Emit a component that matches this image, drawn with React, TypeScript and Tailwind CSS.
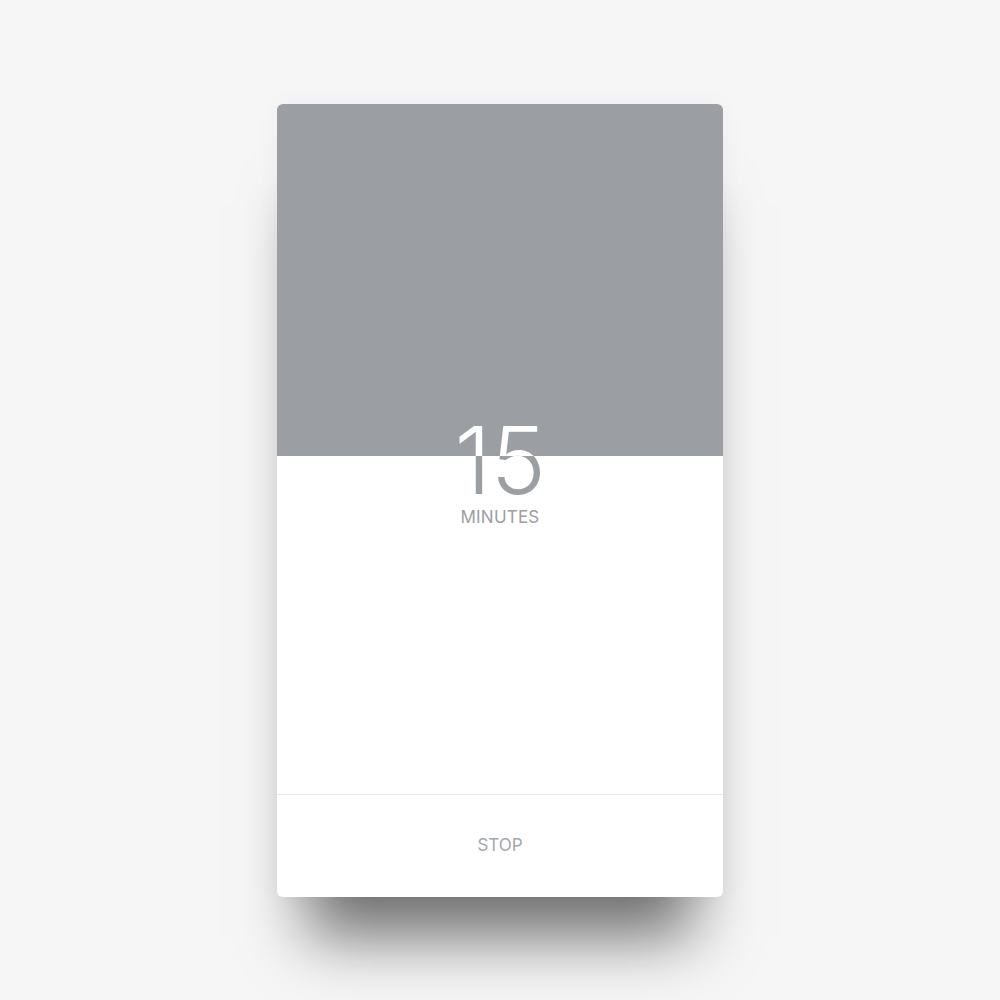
import React from "react";

function Readout({ tone }: { tone: string }) {
  return (
    <div className="flex flex-col items-center pt-[310px]">
      <div
        className={`text-[93px] leading-none font-light tracking-[-0.5px] ${tone}`}
        style={{ fontFamily: "Inter, 'Noto Sans', sans-serif" }}
      >
        15
      </div>
      <div
        className={`mt-[2px] text-[17px] leading-none tracking-[0.2px] ${tone}`}
        style={{ fontFamily: "Inter, 'Noto Sans', sans-serif" }}
      >
        MINUTES
      </div>
    </div>
  );
}

export default function App() {
  return (
    <div className="min-h-screen w-full bg-[#f6f6f6] flex items-center justify-center">
      <div className="w-[446px] h-[793px] bg-white rounded-[6px] flex flex-col overflow-hidden shadow-[0_70px_60px_-30px_rgba(0,0,0,0.55),0_0_24px_rgba(0,0,0,0.04)]">
        <div className="relative flex-1">
          <Readout tone="text-[#9b9ea3]" />
          {/* elapsed-time fill, with the readout drawn in white where it overlaps */}
          <div className="absolute inset-x-0 top-0 h-[352px] bg-[#9b9ea3] overflow-hidden">
            <Readout tone="text-white" />
          </div>
        </div>
        <div className="h-[103px] border-t border-[#e6e6e6] flex items-center justify-center">
          <span
            className="text-[17px] leading-none text-[#a3a6ab]"
            style={{ fontFamily: "Inter, 'Noto Sans', sans-serif" }}
          >
            STOP
          </span>
        </div>
      </div>
    </div>
  );
}
